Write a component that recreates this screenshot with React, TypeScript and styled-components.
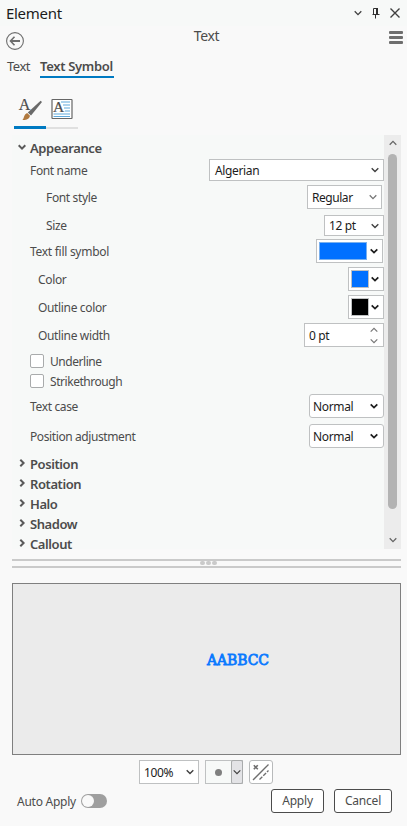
import React from "react";
import styled, { createGlobalStyle } from "styled-components";

const GlobalStyle = createGlobalStyle`
  html, body { margin: 0; padding: 0; background: #f9f9f9; }
  *, *::before, *::after { box-sizing: border-box; }
  body { font-family: "Noto Sans", "Open Sans", sans-serif; font-size: 12px; color: #4c4c4c; }
  button { font-family: inherit; }
  svg { display: block; flex: none; }
`;

const Pane = styled.div`
  width: 407px;
  height: 826px;
  display: flex;
  flex-direction: column;
  overflow: hidden;
  background: #f9f9f9;
`;

const Text = styled.span<{ $size?: number; $track?: number; $weight?: number; $color?: string }>`
  padding-top: 1px;
  font-size: ${(p) => p.$size ?? 12}px;
  letter-spacing: ${(p) => p.$track ?? -0.35}px;
  font-weight: ${(p) => p.$weight ?? 400};
  color: ${(p) => p.$color ?? "inherit"};
  line-height: 16px;
  white-space: nowrap;
`;

const TitleBar = styled.header`
  height: 26px;
  display: flex;
  align-items: center;
  padding: 0 7px 0 6px;
  background: #f7f9f8;
`;

const Title = styled(Text)`
  padding: 0 0 1px;
`;

const TitleActions = styled.div`
  margin-left: auto;
  display: flex;
  align-items: center;
  gap: 10px;
`;

const NavBar = styled.div`
  height: 32px;
  display: grid;
  grid-template-columns: 40px 1fr 40px;
  padding: 0 4px 0 6px;
`;

const NavTitle = styled.div`
  text-align: center;
  padding: 2px 0 0 4px;
`;

const BackSlot = styled.div`
  padding-top: 6px;
`;

const MenuSlot = styled.div`
  display: flex;
  flex-direction: column;
  align-items: flex-end;
  gap: 2px;
  padding-top: 5px;
`;

const MenuLine = styled.i`
  width: 14px;
  height: 3px;
  border-radius: 1px;
  background: #6e6e6e;
`;

const Tabs = styled.nav`
  height: 20px;
  display: flex;
  gap: 10px;
  padding-left: 7px;
`;

const Tab = styled.div<{ $active?: boolean; $width: number }>`
  width: ${(p) => p.$width}px;
  height: 20px;
  border-bottom: 2px solid ${(p) => (p.$active ? "#007ac2" : "transparent")};
`;

const IconTabs = styled.div`
  display: flex;
  margin: 17px 0 0 14px;
  height: 40px;
`;

const IconTab = styled.div<{ $active?: boolean }>`
  width: 32px;
  height: 34px;
  padding-top: 2px;
  display: flex;
  justify-content: center;
  border-bottom: ${(p) => (p.$active ? "3px solid #007ac2" : "2px solid #e0e0e0")};
`;

const ScrollArea = styled.section`
  display: flex;
  width: 389px;
  height: 414px;
  margin-left: 12px;
`;

const Properties = styled.div`
  width: 372px;
  background: #f7f9f8;
  padding-left: 6px;
`;

const ScrollBar = styled.div`
  width: 17px;
  display: flex;
  flex-direction: column;
  align-items: center;
  background: #ececec;
  padding: 4px 0 5px;
`;

const Thumb = styled.div`
  width: 9px;
  height: 355px;
  margin-top: 7px;
  border-radius: 5px;
  background: #b3b3b3;
`;

const ScrollDown = styled.div`
  margin-top: auto;
`;

const GroupHeader = styled.div<{ $height?: number }>`
  height: ${(p) => p.$height ?? 20}px;
  display: grid;
  grid-template-columns: 12px 1fr;
  align-items: center;
`;

const GroupList = styled.div`
  height: 96px;
`;

const Row = styled.div<{ $indent?: number; $height?: number; $gap?: number; $inset?: number }>`
  height: ${(p) => p.$height ?? 24}px;
  margin-bottom: ${(p) => p.$gap ?? 4}px;
  padding-left: ${(p) => 12 + (p.$indent ?? 0)}px;
  padding-right: ${(p) => p.$inset ?? 0}px;
  display: flex;
  align-items: center;
  justify-content: space-between;
`;

const Checks = styled.div`
  margin-bottom: 3px;
`;

const Combo = styled.div<{ $width: number; $rounded?: boolean; $pad?: number; $end?: number }>`
  width: ${(p) => p.$width}px;
  height: 100%;
  display: flex;
  align-items: center;
  justify-content: space-between;
  padding: 0 ${(p) => p.$end ?? 4}px 0 ${(p) => p.$pad ?? 5}px;
  border: 1px solid #bfc1c2;
  border-radius: ${(p) => (p.$rounded ? 3 : 0)}px;
  background: #fff;
  color: #1c1c1c;
`;

const Swatch = styled.span<{ $width: number; $color: string; $edge: string }>`
  width: ${(p) => p.$width}px;
  height: 18px;
  border: 1px solid ${(p) => p.$edge};
  background: ${(p) => p.$color};
`;

const Spinner = styled.span`
  height: 19px;
  display: flex;
  flex-direction: column;
  justify-content: space-between;
`;

const CheckRow = styled.label`
  height: 20px;
  display: flex;
  align-items: center;
  gap: 6px;
  padding-left: 12px;
`;

const CheckBox = styled.span`
  width: 14px;
  height: 14px;
  border: 1px solid #a9abac;
  border-radius: 2px;
  background: #fff;
`;

const Splitter = styled.div`
  height: 9px;
  width: 389px;
  margin: 10px 0 0 12px;
  border-top: 2px solid #cacaca;
  border-bottom: 2px solid #cacaca;
  display: flex;
  align-items: flex-start;
  justify-content: center;
  gap: 1px;
  padding-left: 4px;
`;

const Grip = styled.i`
  width: 5px;
  height: 4px;
  border-radius: 2px;
  background: #cacaca;
`;

const Preview = styled.section`
  width: 389px;
  height: 172px;
  margin: 15px 0 0 12px;
  padding: 67px 0 0 194px;
  border: 1px solid #7f7f7f;
  background: #ebebeb;
`;

const Sample = styled.span`
  display: block;
  font-family: "DejaVu Serif", serif;
  font-size: 14px;
  letter-spacing: -0.1px;
  line-height: 18px;
  color: #0a79ff;
  -webkit-text-stroke: 0.8px #0a79ff;
  white-space: nowrap;
`;

const PreviewTools = styled.div`
  height: 24px;
  margin: 5px 0 0 139px;
  display: flex;
  gap: 6px;
`;

const DotPicker = styled.div`
  width: 38px;
  height: 24px;
  display: flex;
  border: 1px solid #bfc1c2;
  background: #f7f9f8;
`;

const DotFace = styled.div`
  flex: 1;
  display: flex;
  align-items: center;
  justify-content: center;
`;

const Dot = styled.i`
  width: 7px;
  height: 7px;
  border-radius: 50%;
  background: #7f7f7f;
`;

const DotArrow = styled.div`
  width: 12px;
  margin: -1px -1px -1px 0;
  display: flex;
  align-items: center;
  justify-content: center;
  border: 1px solid #a9abac;
  border-radius: 2px;
  background: #e3e3e6;
`;

const IconButton = styled.div`
  width: 24px;
  height: 24px;
  border: 1px solid #b8babb;
  border-radius: 3px;
  background: #fff;
  display: flex;
  align-items: center;
  justify-content: center;
`;

const Footer = styled.footer`
  height: 24px;
  margin-top: 5px;
  padding: 0 15px 0 17px;
  display: flex;
  align-items: center;
`;

const Toggle = styled.span`
  width: 26px;
  height: 14px;
  padding: 1px;
  border-radius: 7px;
  background: #9f9f9f;
  &::before {
    content: "";
    display: block;
    width: 12px;
    height: 12px;
    border-radius: 50%;
    background: #f9f9f9;
  }
`;

const AutoApply = styled.div`
  width: 90px;
  display: flex;
  align-items: center;
  justify-content: space-between;
`;

const Buttons = styled.div`
  margin-left: auto;
  display: flex;
  gap: 10px;
`;

const Button = styled.button<{ $width: number }>`
  width: ${(p) => p.$width}px;
  height: 24px;
  padding: 0 0 1px;
  border: 1px solid #4c4c4c;
  border-radius: 3px;
  background: #fff;
  color: #4c4c4c;
  display: flex;
  align-items: center;
  justify-content: center;
`;

type ChevronProps = { dir?: "down" | "up" | "right"; color?: string; weight?: number; size?: number };

const turns = { down: 0, up: 180, right: -90 };

const Chevron = ({ dir = "down", color = "#404040", weight = 1.4, size = 8 }: ChevronProps) => (
  <svg width={size} height={size} viewBox="0 0 8 8" fill="none" stroke={color} strokeWidth={weight}>
    <path d="M0.7 2.3 4 5.6 7.3 2.3" transform={`rotate(${turns[dir]} 4 4)`} />
  </svg>
);

const PinIcon = () => (
  <svg width="8" height="11" viewBox="0 0 8 11" fill="none" stroke="#303030">
    <path d="M1.5 6V.5H5.5V6M.5 6.5H7.5M3.5 6.5V10.5" />
    <path d="M5 0V6" strokeWidth="2" />
  </svg>
);

const CloseIcon = () => (
  <svg width="10" height="10" viewBox="0 0 10 10" stroke="#404040" strokeWidth="1.4">
    <path d="M.5.5 9.5 9.5M9.5.5.5 9.5" />
  </svg>
);

const BackIcon = () => (
  <svg width="18" height="18" viewBox="0 0 18 18" fill="none" stroke="#6e6e6e">
    <circle cx="9" cy="9" r="8.4" strokeWidth="1.1" />
    <path d="M14 9H5" strokeWidth="2" />
    <path d="M8.5 4.8 4.5 9 8.5 13.2" strokeWidth="1.6" />
  </svg>
);

const GlyphA = styled.text`
  font-family: "Liberation Serif", serif;
  fill: #4c4c4c;
  stroke: #4c4c4c;
  stroke-width: 0.2px;
`;

const BrushIcon = () => (
  <svg width="24" height="24" viewBox="0 0 24 24">
    <GlyphA x="0.8" y="13" fontSize="16">A</GlyphA>
    <path d="M24 5 22.6 3.8 9.8 15.4 13 18.6Z" fill="#6a6a6a" />
    <path d="M9.2 16 12 18.8C11.4 22.5 7.4 23.4 4.4 23 6.4 21.5 5.4 17.5 9.2 16Z" fill="#b0793f" />
  </svg>
);

const ParagraphIcon = () => (
  <svg width="22" height="24" viewBox="0 -1.5 22 24">
    <rect x="1" y="1" width="20" height="19" rx=".5" fill="#fff" stroke="#666" strokeWidth="1.2" />
    <path d="M10 3.5H19M12 6.5H19M13 9.5H19M14 12.5H19M2.5 15.5H19M2.5 18H19" stroke="#5fa9db" />
    <GlyphA x="2" y="13.5" fontSize="15.5">A</GlyphA>
  </svg>
);

const HatchIcon = () => (
  <svg width="18" height="18" viewBox="0 0 18 18" fill="none" stroke="#6e6e6e">
    <path d="M1.8 2.2 5.8 6.2M5.8 2.2 1.8 6.2" strokeWidth="1.6" />
    <path d="M1 17 16.5 1.5" strokeWidth="1.3" />
    <path d="M7.5 16.5 16.5 7.5" strokeWidth="1.3" strokeDasharray="4 1.3" />
  </svg>
);

const groups = ["Position", "Rotation", "Halo", "Shadow", "Callout"];

export default function App() {
  return (
    <Pane>
      <GlobalStyle />
      <TitleBar>
        <Title $size={15} $track={-0.3} $color="#1c1c1c">Element</Title>
        <TitleActions>
          <Chevron weight={1.3} />
          <PinIcon />
          <CloseIcon />
        </TitleActions>
      </TitleBar>
      <NavBar>
        <BackSlot><BackIcon /></BackSlot>
        <NavTitle><Text $size={14}>Text</Text></NavTitle>
        <MenuSlot><MenuLine /><MenuLine /><MenuLine /></MenuSlot>
      </NavBar>
      <Tabs>
        <Tab $width={23}><Text $size={13} $track={-0.5}>Text</Text></Tab>
        <Tab $width={74} $active><Text $size={13} $weight={600} $track={-0.32}>Text Symbol</Text></Tab>
      </Tabs>
      <IconTabs>
        <IconTab $active><BrushIcon /></IconTab>
        <IconTab><ParagraphIcon /></IconTab>
      </IconTabs>

      <ScrollArea>
        <Properties>
          <GroupHeader $height={24}>
            <Chevron weight={2} color="#5a5a5a" />
            <Text $size={13} $weight={600} $track={-0.4}>Appearance</Text>
          </GroupHeader>
          <Row $height={22}>
            <Text>Font name</Text>
            <Combo $width={175}><Text>Algerian</Text><Chevron /></Combo>
          </Row>
          <Row $indent={16} $gap={6} $inset={2}>
            <Text>Font style</Text>
            <Combo $width={75} $pad={4}><Text $track={-0.45}>Regular</Text><Chevron color="#777" weight={1.3} /></Combo>
          </Row>
          <Row $indent={16} $height={21} $gap={3}>
            <Text>Size</Text>
            <Combo $width={60} $pad={4}><Text>12 pt</Text><Chevron /></Combo>
          </Row>
          <Row $inset={1}>
            <Text $track={-0.28}>Text fill symbol</Text>
            <Combo $width={67} $pad={2}><Swatch $width={48} $color="#0070ff" $edge="#79b0ee" /><Chevron color="#1c1c1c" weight={1.7} /></Combo>
          </Row>
          <Row $indent={8}>
            <Text>Color</Text>
            <Combo $width={36} $pad={2}><Swatch $width={18} $color="#0070ff" $edge="#bfc1c2" /><Chevron color="#1c1c1c" weight={1.7} /></Combo>
          </Row>
          <Row $indent={8}>
            <Text>Outline color</Text>
            <Combo $width={36} $pad={2}><Swatch $width={18} $color="#000" $edge="#bfc1c2" /><Chevron color="#1c1c1c" weight={1.7} /></Combo>
          </Row>
          <Row $indent={8}>
            <Text>Outline width</Text>
            <Combo $width={80} $pad={4} $end={5}>
              <Text>0 pt</Text>
              <Spinner>
                <Chevron dir="up" color="#777" weight={1.2} />
                <Chevron color="#777" weight={1.2} />
              </Spinner>
            </Combo>
          </Row>
          <Checks>
            <CheckRow><CheckBox /><Text $track={-0.45}>Underline</Text></CheckRow>
            <CheckRow><CheckBox /><Text $track={-0.45}>Strikethrough</Text></CheckRow>
          </Checks>
          <Row $gap={6}>
            <Text>Text case</Text>
            <Combo $width={75} $pad={3} $end={5} $rounded><Text>Normal</Text><Chevron color="#1c1c1c" weight={1.7} /></Combo>
          </Row>
          <Row $gap={5}>
            <Text $track={-0.4}>Position adjustment</Text>
            <Combo $width={75} $pad={3} $end={5} $rounded><Text>Normal</Text><Chevron color="#1c1c1c" weight={1.7} /></Combo>
          </Row>
          <GroupList>
            {groups.map((name) => (
              <GroupHeader key={name}>
                <Chevron dir="right" weight={2} color="#5a5a5a" />
                <Text $size={13} $weight={600} $track={-0.42}>{name}</Text>
              </GroupHeader>
            ))}
          </GroupList>
        </Properties>
        <ScrollBar>
          <Chevron dir="up" color="#666" weight={1.3} />
          <Thumb />
          <ScrollDown><Chevron color="#666" weight={1.3} /></ScrollDown>
        </ScrollBar>
      </ScrollArea>

      <Splitter><Grip /><Grip /><Grip /></Splitter>
      <Preview><Sample>AABBCC</Sample></Preview>
      <PreviewTools>
        <Combo $width={60} $pad={4}><Text>100%</Text><Chevron /></Combo>
        <DotPicker>
          <DotFace><Dot /></DotFace>
          <DotArrow><Chevron weight={1.2} /></DotArrow>
        </DotPicker>
        <IconButton><HatchIcon /></IconButton>
      </PreviewTools>
      <Footer>
        <AutoApply><Text $track={-0.25}>Auto Apply</Text><Toggle /></AutoApply>
        <Buttons>
          <Button $width={53}><Text $track={-0.2}>Apply</Text></Button>
          <Button $width={58}><Text $track={-0.2}>Cancel</Text></Button>
        </Buttons>
      </Footer>
    </Pane>
  );
}
